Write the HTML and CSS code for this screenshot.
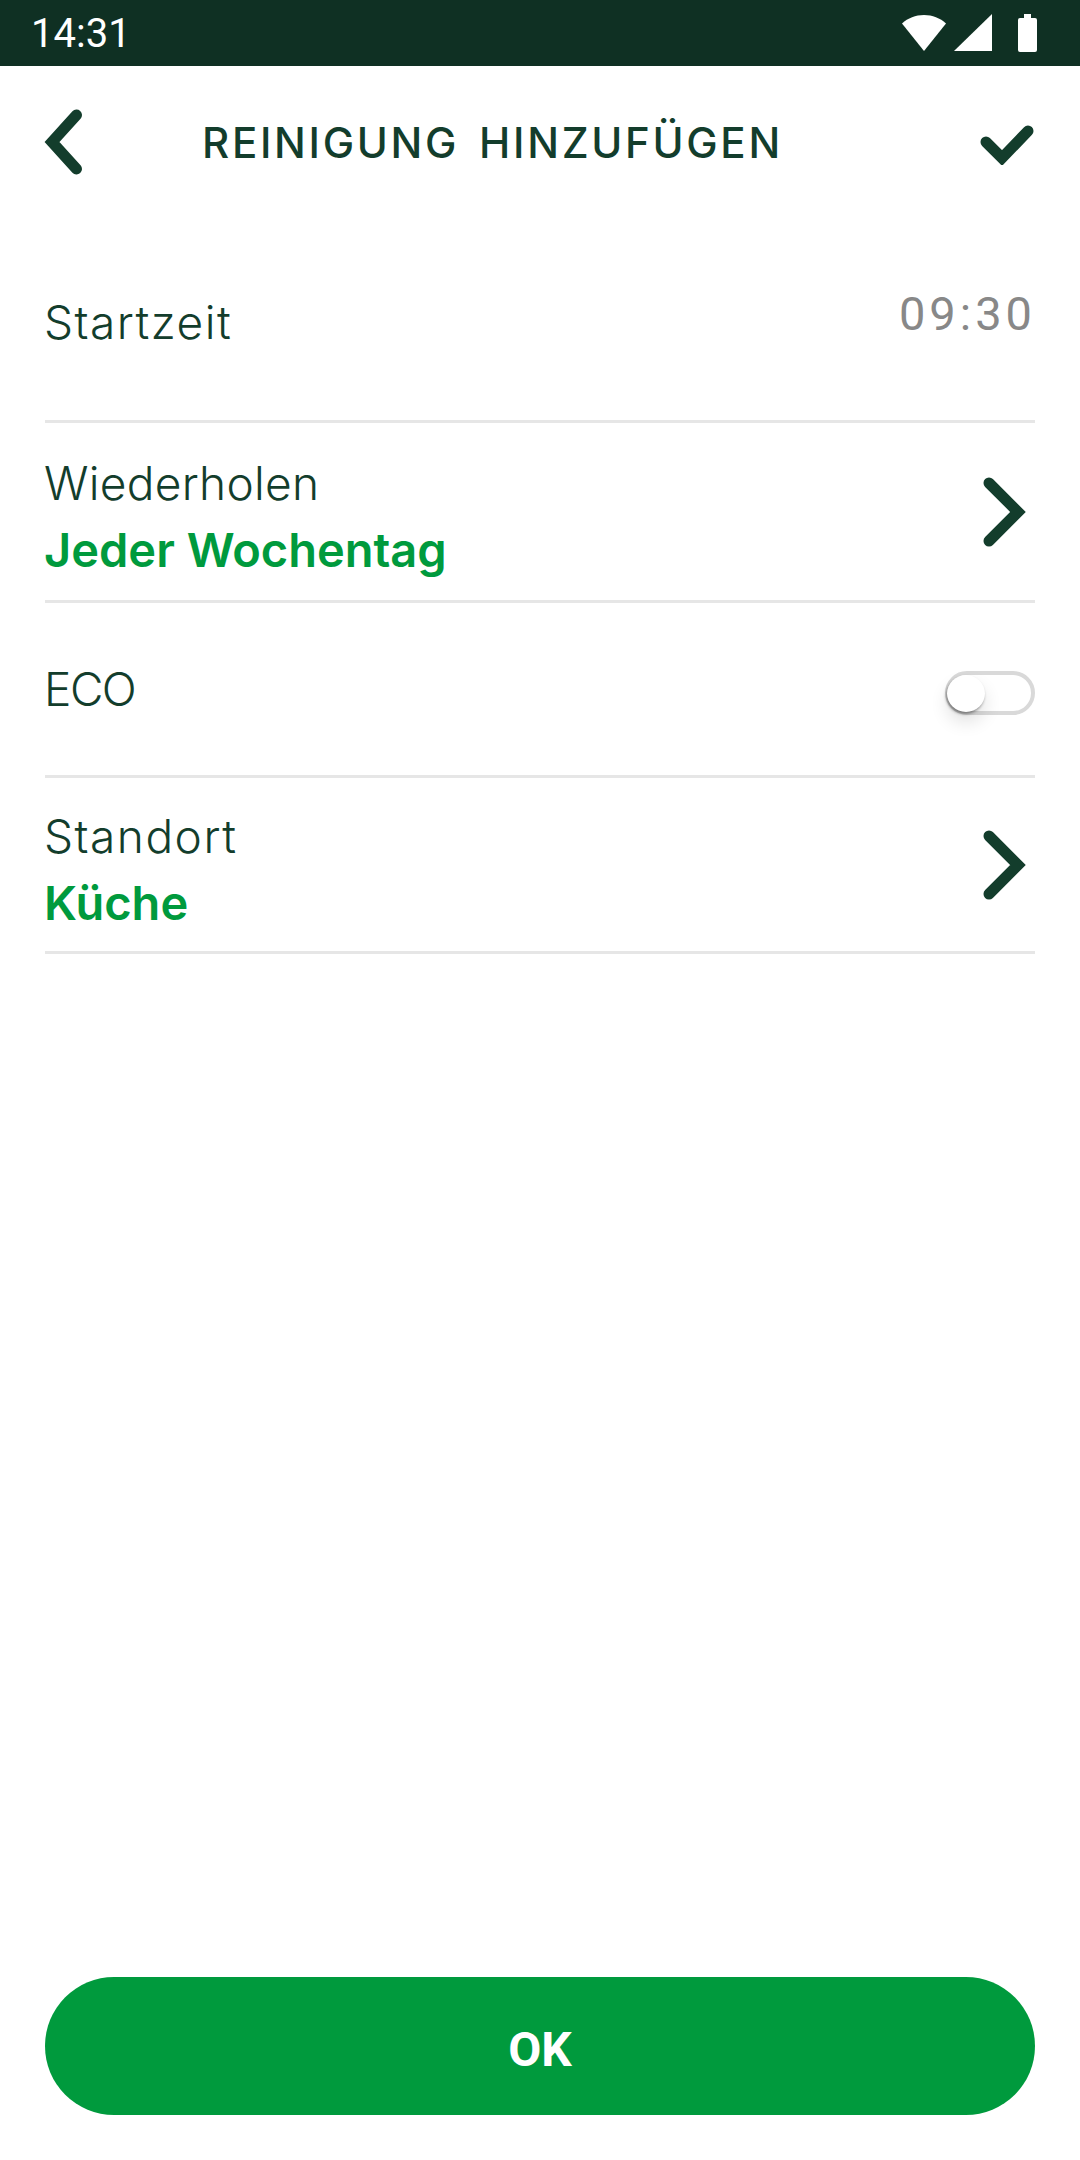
FILE: index.html
```html
<!DOCTYPE html>
<html lang="de">
<head>
    <meta charset="UTF-8">
    <meta name="viewport" content="width=device-width, initial-scale=1.0">
    <title>Reinigung hinzufügen</title>
    <link rel="stylesheet" href="styles.css">
</head>
<body>
    <div class="status-bar">
        <span class="status-time">14:31</span>
        <div class="status-icons">
            <svg class="icon-wifi" width="44" height="36" viewBox="0 0 44 36"><path d="M0 8.5C6 3 13.500 0 22 0s16 3 22 8.500L22 36z" fill="#fff"/></svg>
            <svg class="icon-signal" width="38" height="38" viewBox="0 0 38 38"><path d="M38 0v37H0z" fill="#fff"/></svg>
            <svg class="icon-battery" width="19" height="38" viewBox="0 0 19 38"><path d="M6 0h7v4h4a2 2 0 0 1 2 2v30a2 2 0 0 1-2 2H2a2 2 0 0 1-2-2V6a2 2 0 0 1 2-2h4z" fill="#fff"/></svg>
        </div>
    </div>

    <header class="title-bar">
        <svg class="icon-back" width="40" height="66" viewBox="0 0 40 66"><path d="M33.500 6L9 33l24.500 27" class="stroke-icon"/></svg>
        <h1 class="title">REINIGUNG HINZUFÜGEN</h1>
        <svg class="icon-check" width="54" height="40" viewBox="0 0 54 40"><path d="M6 17l16 16L48 6" class="stroke-icon"/></svg>
    </header>

    <main class="settings">
        <div class="row row-time">
            <span class="label label-wide">Startzeit</span>
            <span class="time-value">09:30</span>
        </div>
        <div class="row row-link">
            <div class="row-text">
                <span class="label label-repeat">Wiederholen</span>
                <span class="value">Jeder Wochentag</span>
            </div>
            <svg class="chevron" width="44" height="70" viewBox="0 0 44 70"><path d="M6 6l29 29L6 64" class="stroke-icon"/></svg>
        </div>
        <div class="row row-eco">
            <span class="label label-narrow">ECO</span>
            <div class="toggle"><div class="toggle-knob"></div></div>
        </div>
        <div class="row row-link row-last">
            <div class="row-text">
                <span class="label label-wide">Standort</span>
                <span class="value">Küche</span>
            </div>
            <svg class="chevron" width="44" height="70" viewBox="0 0 44 70"><path d="M6 6l29 29L6 64" class="stroke-icon"/></svg>
        </div>
    </main>

    <button class="ok-button">OK</button>
</body>
</html>
```

FILE: styles.css
```css
* {
    box-sizing: border-box;
}
body {
    margin: 0;
    height: 2160px;
    display: flex;
    flex-direction: column;
    background-color: white;
    color: #133d2c;
    font-family: Inter, "Liberation Sans", sans-serif;
    overflow: hidden;
}
.status-bar {
    height: 66px;
    flex-shrink: 0;
    display: flex;
    align-items: center;
    justify-content: space-between;
    padding: 0 43px 0 31px;
    background-color: #0f3023;
    color: white;
}
.status-time {
    font-family: Roboto, sans-serif;
    font-size: 40px;
}
.status-icons {
    display: flex;
    align-items: center;
}
.icon-wifi {
    margin-right: 8px;
}
.icon-signal {
    margin-right: 26px;
}
.title-bar {
    height: 142px;
    flex-shrink: 0;
    display: flex;
    align-items: center;
    padding: 10px 46px 0 43px;
}
.stroke-icon {
    fill: none;
    stroke: #133d2c;
    stroke-width: 11;
    stroke-linecap: round;
    stroke-linejoin: miter;
}
.icon-check {
    margin-top: 5px;
}
.title {
    margin: 0 0 0 119px;
    flex: 1;
    font-size: 42px;
    font-weight: 500;
    letter-spacing: 2.7px;
    word-spacing: 6px;
}
.settings {
    padding: 0 45px;
    display: flex;
    flex-direction: column;
}
.row {
    display: flex;
    justify-content: space-between;
    border-bottom: 3px solid #e6e6e6;
}
.row-time {
    height: 215px;
    padding-top: 87px;
}
.row-link {
    height: 180px;
    align-items: center;
    padding-right: 8px;
}
.row-eco {
    height: 175px;
    padding-top: 59px;
}
.row-last {
    height: 176px;
}
.row-text {
    display: flex;
    flex-direction: column;
    gap: 11px;
    padding-top: 10px;
}
.label {
    margin-left: -1px;
    font-size: 46px;
    font-weight: 350;
    line-height: 55px;
    color: #133d2c;
}
.label-wide {
    letter-spacing: 1.5px;
}
.label-repeat {
    letter-spacing: 0.3px;
}
.label-narrow {
    letter-spacing: -1.5px;
}
.value {
    margin-left: -1px;
    font-size: 47px;
    line-height: 55px;
    font-weight: 600;
    color: #009a3d;
}
.time-value {
    font-family: Roboto, sans-serif;
    font-size: 47px;
    line-height: 52px;
    letter-spacing: 4px;
    color: #888;
    margin-top: -7px;
    margin-right: -1px;
}
.toggle {
    position: relative;
    width: 90px;
    height: 44px;
    margin-top: 9px;
    border: 4px solid #d9d9d9;
    border-radius: 22px;
    background-color: white;
}
.toggle-knob {
    position: absolute;
    left: -2px;
    top: 0;
    width: 38px;
    height: 37px;
    border-radius: 50%;
    background-color: white;
    box-shadow: -1px 2px 3px rgba(0, 0, 0, 0.4), 0 10px 18px rgba(0, 0, 0, 0.12);
}
.ok-button {
    margin: auto 45px 45px;
    height: 138px;
    flex-shrink: 0;
    padding-top: 7px;
    border: none;
    border-radius: 69px;
    background-color: #009a3d;
    color: white;
    font-family: Roboto, sans-serif;
    font-size: 48px;
    font-weight: bold;
}
```
